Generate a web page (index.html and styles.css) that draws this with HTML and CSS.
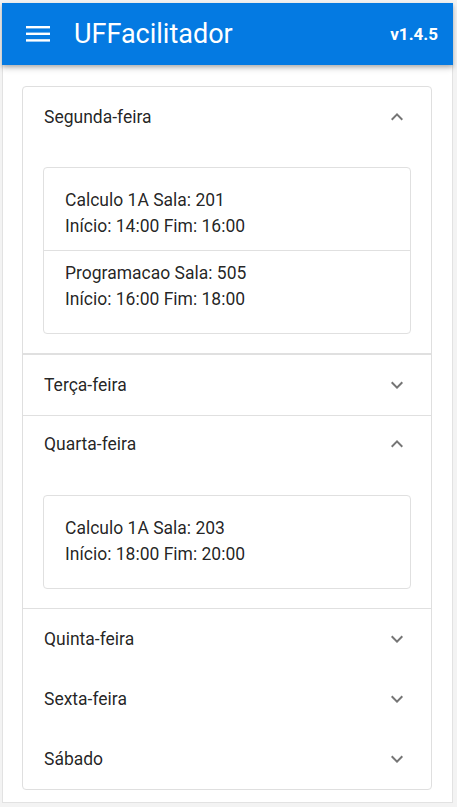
FILE: index.html
```html
<!DOCTYPE html>
<html lang="pt-BR">
<head>
<meta charset="utf-8">
<title>UFFacilitador</title>
<link rel="stylesheet" href="styles.css">
</head>
<body>
<div class="frame">
  <header class="topbar">
    <svg class="menu-icon" width="24" height="16" viewBox="0 0 24 16" aria-hidden="true">
      <rect x="0" y="0" width="24" height="2.4" fill="#fff"/>
      <rect x="0" y="6.6" width="24" height="2.4" fill="#fff"/>
      <rect x="0" y="13.2" width="24" height="2.4" fill="#fff"/>
    </svg>
    <h1 class="title">UFFacilitador</h1>
    <span class="version">v1.4.5</span>
  </header>
  <main class="content">
    <div class="accordion">
      <section class="panel open divider-thick">
        <div class="panel-head">
          <span>Segunda-feira</span>
          <svg class="chev" width="24" height="24" viewBox="0 0 24 24"><path d="M7.41 15.41L12 10.83l4.59 4.58L18 14l-6-6-6 6z" fill="#757575"/></svg>
        </div>
        <div class="panel-body">
          <ul class="list">
            <li class="item"><div>Calculo 1A Sala: 201</div><div>Início: 14:00 Fim: 16:00</div></li>
            <li class="item"><div>Programacao Sala: 505</div><div>Início: 16:00 Fim: 18:00</div></li>
          </ul>
        </div>
      </section>
      <section class="panel divider">
        <div class="panel-head">
          <span>Terça-feira</span>
          <svg class="chev" width="24" height="24" viewBox="0 0 24 24"><path d="M7.41 8.59L12 13.17l4.59-4.58L18 10l-6 6-6-6z" fill="#757575"/></svg>
        </div>
      </section>
      <section class="panel open divider">
        <div class="panel-head panel-head-tight">
          <span>Quarta-feira</span>
          <svg class="chev" width="24" height="24" viewBox="0 0 24 24"><path d="M7.41 15.41L12 10.83l4.59 4.58L18 14l-6-6-6 6z" fill="#757575"/></svg>
        </div>
        <div class="panel-body">
          <ul class="list">
            <li class="item"><div>Calculo 1A Sala: 203</div><div>Início: 18:00 Fim: 20:00</div></li>
          </ul>
        </div>
      </section>
      <section class="panel">
        <div class="panel-head">
          <span>Quinta-feira</span>
          <svg class="chev" width="24" height="24" viewBox="0 0 24 24"><path d="M7.41 8.59L12 13.17l4.59-4.58L18 10l-6 6-6-6z" fill="#757575"/></svg>
        </div>
      </section>
      <section class="panel">
        <div class="panel-head">
          <span>Sexta-feira</span>
          <svg class="chev" width="24" height="24" viewBox="0 0 24 24"><path d="M7.41 8.59L12 13.17l4.59-4.58L18 10l-6 6-6-6z" fill="#757575"/></svg>
        </div>
      </section>
      <section class="panel">
        <div class="panel-head">
          <span>Sábado</span>
          <svg class="chev" width="24" height="24" viewBox="0 0 24 24"><path d="M7.41 8.59L12 13.17l4.59-4.58L18 10l-6 6-6-6z" fill="#757575"/></svg>
        </div>
      </section>
    </div>
  </main>
</div>
</body>
</html>
```
FILE: styles.css
```css
* { box-sizing: border-box; }
html, body { margin: 0; padding: 0; }
body {
  background: #f3f3f3;
  font-family: Roboto, "Liberation Sans", Arial, sans-serif;
  color: rgba(0, 0, 0, 0.87);
}
.frame {
  width: 451px;
  margin: 3px 0 0 2px;
  background: #fff;
  border: 1px solid #e2e2e2;
  border-top: none;
  height: 800px;
}
.topbar {
  height: 62px;
  margin: 0 -1px;
  background: #047ae2;
  color: #fff;
  display: flex;
  align-items: center;
  padding: 0 15px 0 24px;
  box-shadow: 0 3px 6px rgba(0, 0, 0, 0.22), 0 2px 3px rgba(0, 0, 0, 0.12);
  position: relative;
}
.menu-icon { display: block; flex: none; }
.title {
  margin: 0 0 0 24px;
  font-size: 27px;
  font-weight: 400;
  flex: 1;
}
.version {
  font-size: 17px;
  font-weight: 700;
}
.content {
  padding: 21px 20px 12px 19px;
}
.accordion {
  border: 1px solid #dfdfdf;
  border-radius: 4px;
}
.panel-head {
  height: 60px;
  display: flex;
  align-items: center;
  justify-content: space-between;
  padding: 0 22px 0 21px;
  font-size: 17.5px;
}
.panel-head-tight { height: 59px; padding-bottom: 3px; }
.chev { display: block; }
.divider { border-bottom: 1px solid #e0e0e0; }
.divider-thick { border-bottom: 2px solid #e0e0e0; }
.panel-body {
  padding: 20px 20px 19px 20px;
}
.list {
  list-style: none;
  margin: 0;
  padding: 10px 0;
  border: 1px solid #e0e0e0;
  border-radius: 4px;
}
.item {
  padding: 9px 21px 11px;
  font-size: 17.5px;
  line-height: 26px;
}
.item + .item { border-top: 1px solid #e0e0e0; }
```
